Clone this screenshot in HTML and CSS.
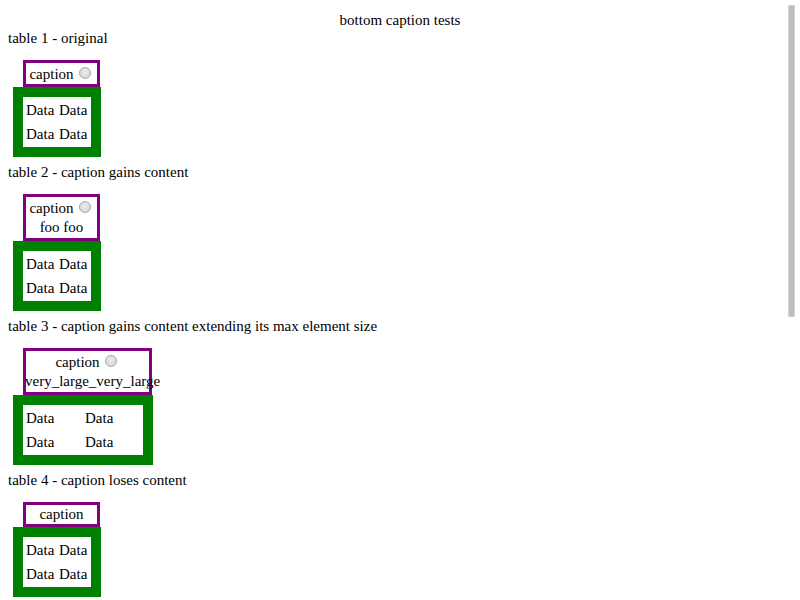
FILE: index.html
```html
<!DOCTYPE html>
<html>
<head>
<meta charset="utf-8">
<title>bottom caption tests</title>
<link rel="stylesheet" href="styles.css">
</head>
<body>
<div class="title">bottom caption tests</div>

<div class="label first">table 1 - original</div>
<div class="test">
  <div class="caption">caption<span class="radio"></span></div>
  <table class="grid">
    <tr><td>Data</td><td>Data</td></tr>
    <tr><td>Data</td><td>Data</td></tr>
  </table>
</div>

<div class="label">table 2 - caption gains content</div>
<div class="test">
  <div class="caption two">caption<span class="radio"></span><br>foo foo</div>
  <table class="grid">
    <tr><td>Data</td><td>Data</td></tr>
    <tr><td>Data</td><td>Data</td></tr>
  </table>
</div>

<div class="label">table 3 - caption gains content extending its max element size</div>
<div class="test">
  <div class="caption two">caption<span class="radio"></span><span class="long">very_large_very_large</span></div>
  <table class="grid wide">
    <tr><td>Data</td><td>Data</td></tr>
    <tr><td>Data</td><td>Data</td></tr>
  </table>
</div>

<div class="label">table 4 - caption loses content</div>
<div class="test">
  <div class="caption">caption</div>
  <table class="grid">
    <tr><td>Data</td><td>Data</td></tr>
    <tr><td>Data</td><td>Data</td></tr>
  </table>
</div>

<div class="thumb"></div>
</body>
</html>
```

FILE: styles.css
```css
html {
  overflow: hidden;
  background: #fff;
}
body {
  margin: 8px;
  font-family: "Liberation Serif", Tinos, "Times New Roman", Times, serif;
  font-size: 15px;
  line-height: 18px;
  color: #000;
}
.title {
  text-align: center;
  margin-top: 3px;
}
.label {
  margin-top: 6px;
}
.label.first {
  margin-top: 0;
}
.test {
  display: inline-flex;
  flex-direction: column;
  margin-top: 13px;
  margin-left: 5px;
  vertical-align: top;
}
.caption {
  margin: 0 1px 0 10px;
  border: 3px solid #800080;
  text-align: center;
  line-height: 19px;
  white-space: nowrap;
}
.caption.two {
  padding-bottom: 1px;
}
.long {
  display: block;
  width: 0;
  text-align: left;
  margin-left: -1px;
}
.radio {
  display: inline-block;
  width: 10px;
  height: 10px;
  margin: 4px 3px 0 5px;
  border: 1px solid #a8a8a8;
  border-radius: 50%;
  background: radial-gradient(circle at 50% 40%, #ececec 0%, #dcdcdc 60%, #cfcfcf 100%);
}
.grid {
  border: 10px solid #008000;
  border-spacing: 2px;
  background: #fff;
}
.grid td {
  width: 29px;
  padding: 2px 1px;
  line-height: 18px;
}
.grid.wide td {
  width: 55px;
}
.thumb {
  position: fixed;
  top: 5px;
  left: 788px;
  width: 5px;
  height: 310px;
  background: #bdbdbd;
  border: 1px solid #d4d4d4;
}
```
